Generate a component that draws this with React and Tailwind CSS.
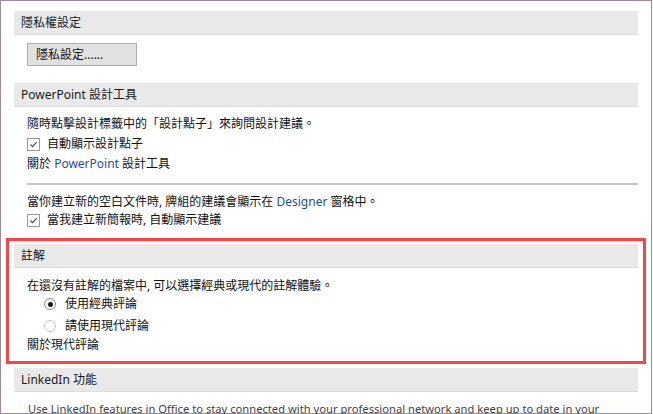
import React from 'react';

const font = { fontFamily: '"Noto Sans", "Noto Sans CJK TC", sans-serif' };

// Section title band used by each options group
const SectionHeader = ({ children }) => (
  <div className="h-[24px] w-[624px] bg-[#e9e9e9] border-b border-[#dcdcdc] flex items-center pl-[7px] text-[12px] text-[#1a1a1a]">
    {children}
  </div>
);

const Checkbox = () => (
  <span className="w-[13px] h-[13px] border border-[#9a9a9a] bg-white flex items-center justify-center shrink-0">
    <svg width="9" height="9" viewBox="0 0 9 9">
      <path d="M1.5 4.5 L3.6 6.6 L7.6 2.2" fill="none" stroke="#4a4a4a" strokeWidth="1.1" />
    </svg>
  </span>
);

const Radio = ({ checked }) => (
  <span
    className={`w-[12px] h-[12px] rounded-full border bg-white flex items-center justify-center shrink-0 ${
      checked ? 'border-[#8a8a8a]' : 'border-[#c4c4c4]'
    }`}
  >
    {checked && <span className="w-[5px] h-[5px] rounded-full bg-[#1a1a1a]" />}
  </span>
);

const Link = ({ children }) => <span className="text-[#1b4f9c]">{children}</span>;

export default function App() {
  return (
    <div className="w-[653px] h-[414px] bg-white overflow-hidden" style={font}>
      <div className="w-[652px] h-[414px] border border-[#9d8a9d] pt-[10px] text-[12px] text-[#111]">
        {/* 隱私權設定 */}
        <div className="pl-[13px]">
          <SectionHeader>隱私權設定</SectionHeader>
          <div className="mt-[8px] ml-[13px]">
            <button className="w-[110px] h-[23px] border border-[#adadad] bg-[#e1e1e1] text-left pl-[8px] text-[12px] leading-none text-[#111]">
              隱私設定......
            </button>
          </div>
        </div>

        {/* PowerPoint 設計工具 */}
        <div className="pl-[13px] mt-[17px]">
          <SectionHeader>PowerPoint 設計工具</SectionHeader>
          <div className="pl-[13px] mt-[7px]">
            <div className="h-[20px] flex items-center">隨時點擊設計標籤中的「設計點子」來詢問設計建議。</div>
            <div className="h-[20px] flex items-center gap-[7px]">
              <Checkbox />
              <span>自動顯示設計點子</span>
            </div>
            <div className="h-[20px] flex items-center">
              關於&nbsp;<Link>PowerPoint</Link>&nbsp;設計工具
            </div>
            <div className="mt-[9px] h-[2px] w-[611px] bg-[#c6c6c6]" />
            <div className="mt-[8px] h-[18px] flex items-center">
              當你建立新的空白文件時, 牌組的建議會顯示在&nbsp;<Link>Designer</Link>&nbsp;窗格中。
            </div>
            <div className="h-[18px] flex items-center gap-[7px]">
              <Checkbox />
              <span>當我建立新簡報時, 自動顯示建議</span>
            </div>
          </div>
        </div>

        {/* 註解 */}
        <div className="ml-[5px] mt-[9px] w-[640px] border-[3px] border-[#f64646] pt-[3px] pl-[5px] pb-[6px]">
          <SectionHeader>註解</SectionHeader>
          <div className="pl-[13px] mt-[8px]">
            <div className="h-[19px] flex items-center">在還沒有註解的檔案中, 可以選擇經典或現代的註解體驗。</div>
            <div className="h-[18px] flex items-center gap-[9px] pl-[17px]">
              <Radio checked />
              <span>使用經典評論</span>
            </div>
            <div className="mt-[4px] h-[18px] flex items-center gap-[9px] pl-[17px]">
              <Radio />
              <span>請使用現代評論</span>
            </div>
            <div className="h-[20px] flex items-center">關於現代評論</div>
          </div>
        </div>

        {/* LinkedIn 功能 */}
        <div className="pl-[13px] mt-[4px]">
          <SectionHeader>LinkedIn 功能</SectionHeader>
          <div className="pl-[14px] mt-[8px] h-[18px] flex items-center text-[11.2px] text-[#444] whitespace-nowrap">
            Use LinkedIn features in Office to stay connected with your professional network and keep up to date in your
          </div>
        </div>
      </div>
    </div>
  );
}
